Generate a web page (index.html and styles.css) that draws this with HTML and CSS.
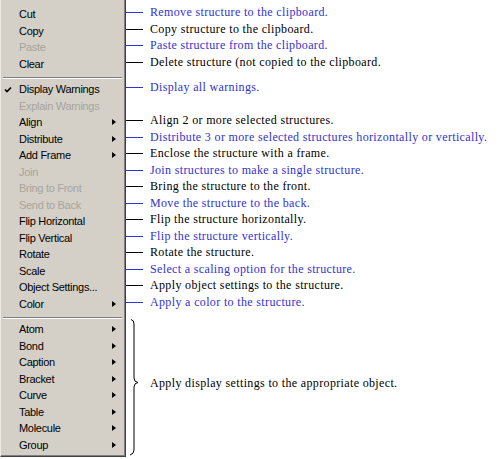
FILE: index.html
```html
<!DOCTYPE html>
<html>
<head>
<meta charset="utf-8">
<link rel="stylesheet" href="styles.css">
</head>
<body>
<div class="figure">
  <div class="m menu-top"></div>

  <div class="m item">Cut</div>
  <div class="desc blue"><span class="line"></span><span class="text">Remove structure to the clipboard.</span></div>
  <div class="m item">Copy</div>
  <div class="desc"><span class="line"></span><span class="text">Copy structure to the clipboard.</span></div>
  <div class="m item off">Paste</div>
  <div class="desc blue"><span class="line"></span><span class="text">Paste structure from the clipboard.</span></div>
  <div class="m item">Clear</div>
  <div class="desc"><span class="line"></span><span class="text">Delete structure (not copied to the clipboard.</span></div>

  <div class="m sep"><div class="rule"></div></div>

  <div class="m item"><svg class="check" width="8" height="8" viewBox="0 0 8 8"><path d="M1 3.5 L3 5.5 L7 1.5" fill="none" stroke="#000" stroke-width="1.6"/></svg>Display Warnings</div>
  <div class="desc blue"><span class="line"></span><span class="text">Display all warnings.</span></div>
  <div class="m item off">Explain Warnings</div>
  <div class="m item">Align<span class="arrow"></span></div>
  <div class="desc"><span class="line"></span><span class="text">Align 2 or more selected structures.</span></div>
  <div class="m item">Distribute<span class="arrow"></span></div>
  <div class="desc blue"><span class="line"></span><span class="text">Distribute 3 or more selected structures horizontally or vertically.</span></div>
  <div class="m item">Add Frame<span class="arrow"></span></div>
  <div class="desc"><span class="line"></span><span class="text">Enclose the structure with a frame.</span></div>
  <div class="m item off">Join</div>
  <div class="desc blue"><span class="line"></span><span class="text">Join structures to make a single structure.</span></div>
  <div class="m item off">Bring to Front</div>
  <div class="desc"><span class="line"></span><span class="text">Bring the structure to the front.</span></div>
  <div class="m item off">Send to Back</div>
  <div class="desc blue"><span class="line"></span><span class="text">Move the structure to the back.</span></div>
  <div class="m item">Flip Horizontal</div>
  <div class="desc"><span class="line"></span><span class="text">Flip the structure horizontally.</span></div>
  <div class="m item">Flip Vertical</div>
  <div class="desc blue"><span class="line"></span><span class="text">Flip the structure vertically.</span></div>
  <div class="m item">Rotate</div>
  <div class="desc"><span class="line"></span><span class="text">Rotate the structure.</span></div>
  <div class="m item">Scale</div>
  <div class="desc blue"><span class="line"></span><span class="text">Select a scaling option for the structure.</span></div>
  <div class="m item">Object Settings...</div>
  <div class="desc"><span class="line"></span><span class="text">Apply object settings to the structure.</span></div>
  <div class="m item">Color<span class="arrow"></span></div>
  <div class="desc blue"><span class="line"></span><span class="text">Apply a color to the structure.</span></div>

  <div class="m sep"><div class="rule"></div></div>
  <div class="group-desc">
    <svg class="brace" width="14" height="141" viewBox="0 0 14 141"><path d="M5 7.5 Q8 8 8 12 V66 Q8 70 12 70.5 Q8 71 8 75 V138 Q8 142 4 143" fill="none" stroke="#000" stroke-width="1"/></svg>
    <span class="text">Apply display settings to the appropriate object.</span>
  </div>

  <div class="m item">Atom<span class="arrow"></span></div>
  <div class="m item">Bond<span class="arrow"></span></div>
  <div class="m item">Caption<span class="arrow"></span></div>
  <div class="m item">Bracket<span class="arrow"></span></div>
  <div class="m item">Curve<span class="arrow"></span></div>
  <div class="m item">Table<span class="arrow"></span></div>
  <div class="m item">Molecule<span class="arrow"></span></div>
  <div class="m item">Group<span class="arrow"></span></div>

  <div class="m menu-bottom"></div>
</div>
</body>
</html>
```

FILE: styles.css
```css
html, body {
  margin: 0;
  padding: 0;
  background: #fff;
}

.figure {
  width: 502px;
  display: grid;
  grid-template-columns: 126px 1fr;
}

.m {
  grid-column: 1;
  background: #d4d0c8;
  border-left: 1px solid #ecebe6;
  border-right: 1px solid #404040;
  box-shadow: inset -1px 0 0 #808080;
  box-sizing: border-box;
}

.menu-top {
  height: 6px;
}

.menu-bottom {
  height: 4px;
  border-bottom: 1px solid #404040;
  box-shadow: inset -1px 0 0 #808080, inset 0 -1px 0 #808080;
}

.item {
  position: relative;
  height: 16.5px;
  display: flex;
  align-items: center;
  padding-left: 18px;
  font-family: "Liberation Sans", Arial, sans-serif;
  font-size: 11px;
  letter-spacing: -0.3px;
  color: #000;
  white-space: nowrap;
}

.item.off {
  color: #a7a49d;
}

.check {
  position: absolute;
  left: 3px;
  top: 5px;
}

.arrow {
  margin-left: auto;
  margin-right: 9px;
  width: 0;
  height: 0;
  border-left: 4px solid #000;
  border-top: 3.5px solid transparent;
  border-bottom: 3.5px solid transparent;
}

.sep {
  height: 9px;
  padding: 5px 3px 0 2px;
}

.rule {
  border-top: 1px solid #808080;
  border-bottom: 1px solid #fff;
}

.desc {
  grid-column: 2;
  height: 16.5px;
  box-sizing: border-box;
  padding-bottom: 3px;
  margin-left: -15px;
  display: flex;
  align-items: center;
  font-family: "Liberation Serif", "Times New Roman", serif;
  font-size: 12px;
  letter-spacing: 0.35px;
  color: #000;
  white-space: nowrap;
}

.desc.blue {
  color: #3232d2;
}

.line {
  width: 32px;
  height: 1px;
  background: currentColor;
  flex: none;
}

.desc .text {
  margin-left: 7px;
}

.group-desc {
  grid-column: 2;
  grid-row: span 9;
  display: flex;
  align-items: center;
  font-family: "Liberation Serif", "Times New Roman", serif;
  font-size: 12px;
  letter-spacing: 0.35px;
  color: #000;
  white-space: nowrap;
}

.brace {
  align-self: flex-start;
  overflow: visible;
  flex: none;
}

.group-desc .text {
  margin-left: 10px;
  padding-top: 2px;
}
```
